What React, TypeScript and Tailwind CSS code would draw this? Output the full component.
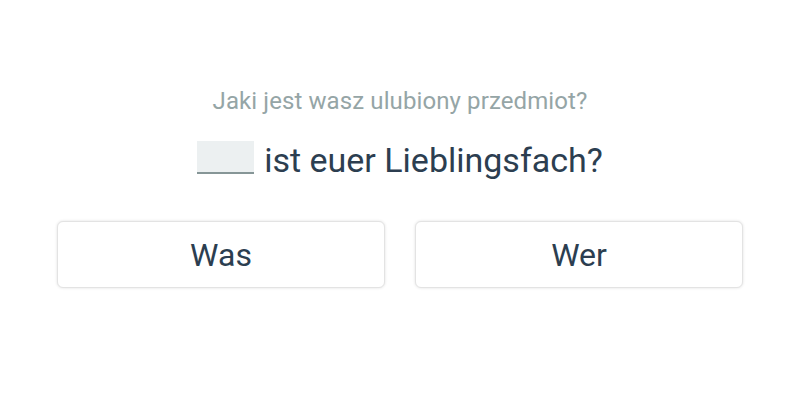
export default function App() {
  return (
    <div className="flex h-[400px] w-[800px] flex-col items-center bg-white font-['Roboto',sans-serif]">
      <p className="mt-[87px] text-[24px] leading-[28px] tracking-[0.1px] text-[#95a5a6]">Jaki jest wasz ulubiony przedmiot?</p>
      <div className="mt-[25px] flex items-start text-[34px] leading-[40px] text-[#2c3e50]">
        <span className="mr-[10px] mt-[1px] inline-block h-[33px] w-[57px] border-b-2 border-[#869697] bg-[#ecf0f1]" />
        <span>ist euer Lieblingsfach?</span>
      </div>
      <div className="mt-[41px] grid w-[686px] grid-cols-2 gap-[30px]">
        {['Was', 'Wer'].map((w) => (
          <button
            key={w}
            className="flex h-[67px] items-center justify-center rounded-[6px] border border-[#e3e3e3] bg-white text-[32px] text-[#2c3e50] shadow-[0_0_3px_rgba(0,0,0,0.12)]"
          >
            {w}
          </button>
        ))}
      </div>
    </div>
  );
}
